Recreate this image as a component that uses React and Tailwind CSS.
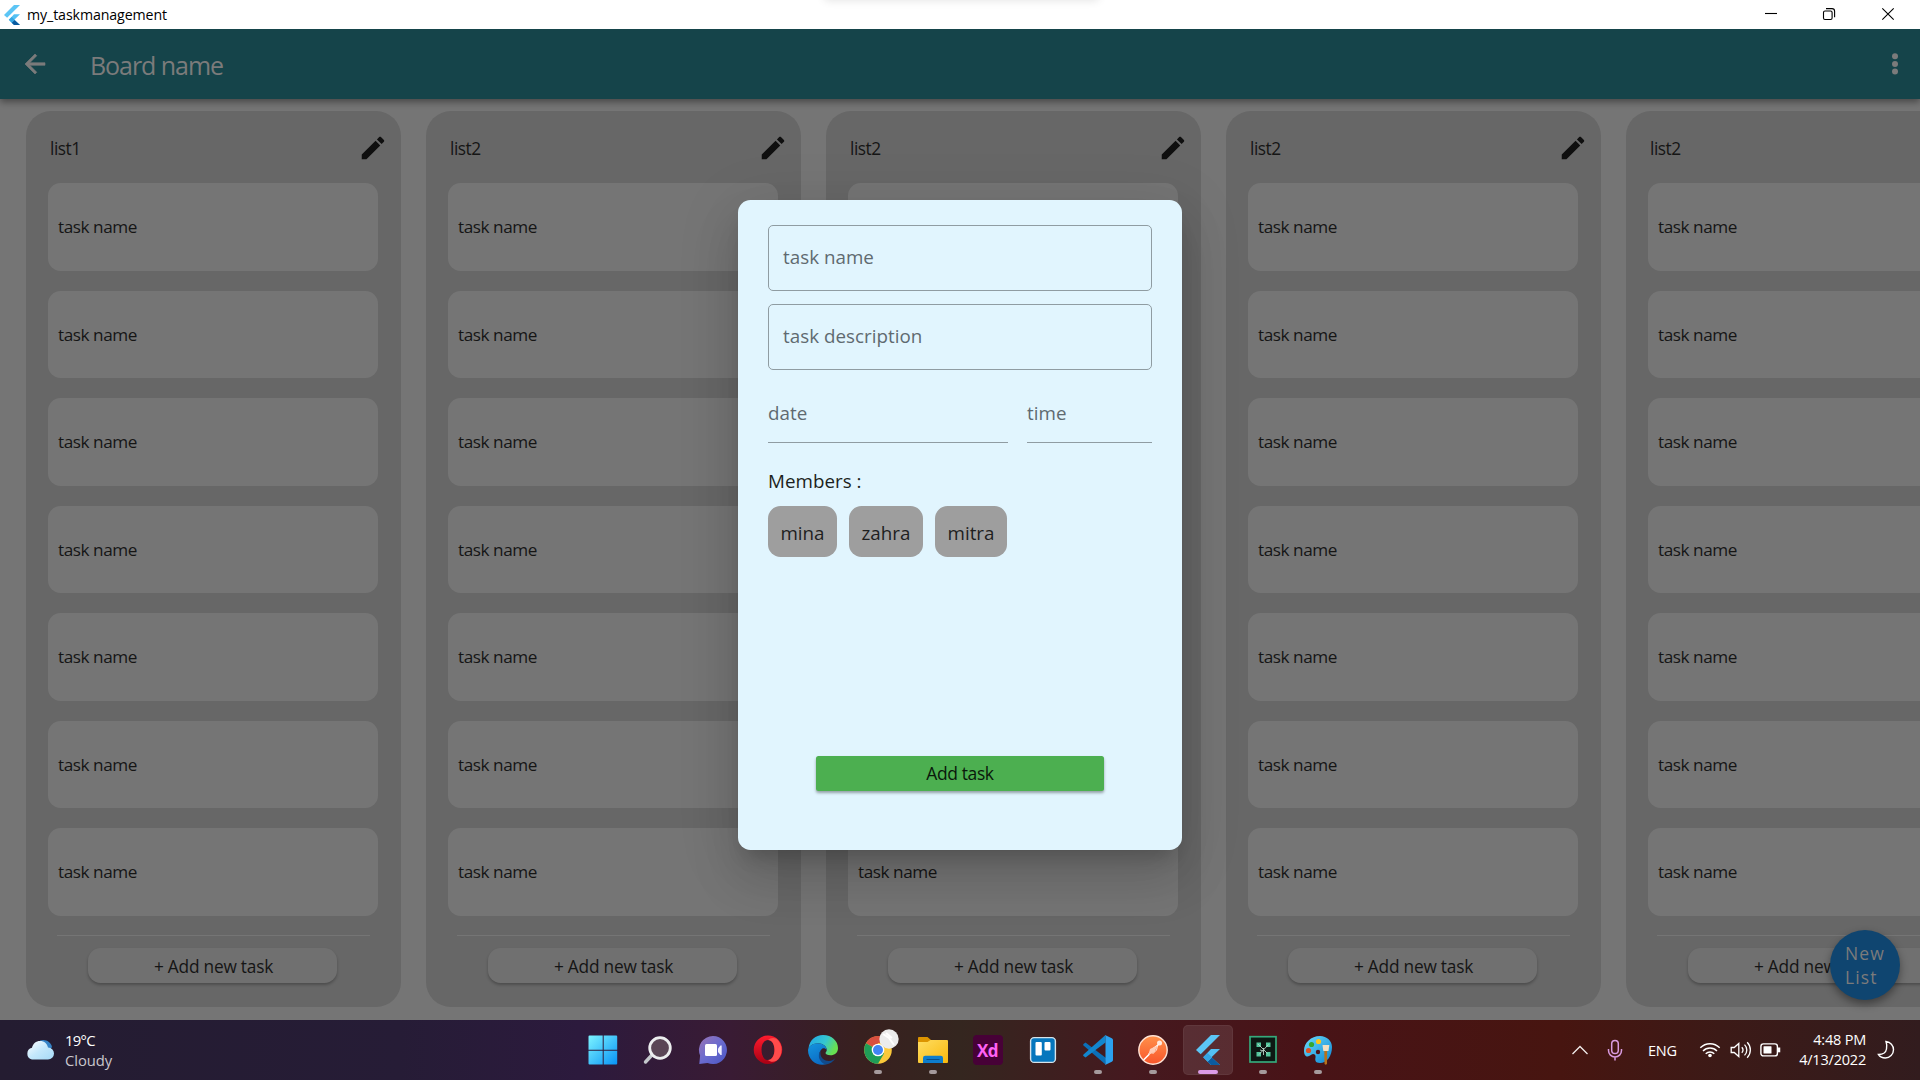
import React from "react";

const LISTS = ["list1", "list2", "list2", "list2", "list2"];
const TASKS = [1, 2, 3, 4, 5, 6, 7];

const Arrow = () => (
  <svg className="size-[30px]" viewBox="0 0 24 24" fill="#7b7b7b" stroke="#7b7b7b" strokeWidth=".5"><path d="M20 11H7.830l5.590-5.590L12 4l-8 8 8 8 1.410-1.410L7.830 13H20v-2z" /></svg>
);
const Pencil = () => (
  <svg className="size-[30px]" viewBox="0 0 24 24" fill="#0f0f0f"><path d="M3 17.250V21h3.750L17.810 9.940l-3.750-3.750L3 17.250zM20.710 7.040c.39-.39.39-1.020 0-1.410l-2.340-2.340c-.39-.39-1.020-.39-1.410 0l-1.830 1.830 3.750 3.750 1.830-1.830z" /></svg>
);
const Dots = () => (
  <svg className="size-[30px]" viewBox="0 0 24 24" fill="#7b7b7b"><circle cx="12" cy="5.800" r="2.400" /><circle cx="12" cy="11.900" r="2.400" /><circle cx="12" cy="18" r="2.400" /></svg>
);
const Flutter = ({ className }) => (
  <svg className={className} viewBox="0 0 24 30">
    <path d="M15 0H24L4.700 19.300 0 15z" fill="#5cc5f5" />
    <path d="M15 14h9L15.500 22.300 24 30h-9l-7.800-7.700z" fill="#54c1f4" />
    <path d="M11.500 26.700 15.900 22.600 24 30h-9z" fill="#0a5ba0" />
    <path d="m7.200 22.300 4.400-4.400 4.400 4.400-4.400 4.400z" fill="#35a7e4" />
  </svg>
);

function TitleBar() {
  return (
    <div className="relative flex h-[29px] items-center justify-between overflow-hidden bg-white">
      <div className="absolute -top-[10px] left-[824px] h-[10px] w-[275px] rounded-[6px] bg-gray-200 shadow-[0_0_9px_1px_rgba(0,0,0,0.1)]" />
      <div className="flex items-center">
        <Flutter className="ml-1 h-5 w-4" />
        <span className="mt-px ml-[7px] text-[14.200px] leading-[20px] tracking-[-0.1px] text-black">my_taskmanagement</span>
      </div>
      <svg className="h-[29px] w-[174px]" viewBox="0 0 174 29" fill="none" stroke="#000" strokeWidth="1.100">
        <path d="M19 13.500h12" />
        <rect x="77.500" y="11" width="8.600" height="8.500" rx="1.500" />
        <path d="M80 8.600h6a2.600 2.600 0 0 1 2.600 2.600v6" />
        <path d="m136.300 8.300 11.400 11.400M147.700 8.300l-11.400 11.400" />
      </svg>
    </div>
  );
}

function TaskList({ name }) {
  return (
    <section className="h-[896px] w-[375px] shrink-0 rounded-[25px] bg-[#676767]">
      <header className="flex h-[72px] items-center justify-between pr-[13px] pl-[24.500px]">
        <span className="mt-[3px] text-[17.300px] tracking-[-0.450px]">{name}</span>
        <div className="mt-[2px]"><Pencil /></div>
      </header>
      <div className="flex flex-col gap-5 px-[22.500px]">
        {TASKS.map((t) => (
          <div key={t} className="flex h-[87.500px] items-center rounded-[12.500px] bg-[#757575] pt-px pl-[10px] text-[17.200px] tracking-[-0.450px]">task name</div>
        ))}
      </div>
      <div className="mx-[31px] mt-[19px] h-px bg-[#757575]" />
      <div className="mt-[12.500px] ml-[62px] flex h-[35px] w-[249px] items-center justify-center rounded-[12.500px] bg-[#707070] pt-[2px] pl-[3px] text-[17.300px] tracking-[-0.220px] shadow-[0_2px_3px_rgba(0,0,0,0.250)]">+ Add new task</div>
    </section>
  );
}

function Dialog() {
  return (
    <div className="absolute top-[170.500px] left-[738px] flex h-[650px] w-[444px] flex-col rounded-[12.500px] bg-[#e1f5fe] px-[30px] pt-[25px] text-[18.800px] tracking-[0.020px] shadow-[0_14px_19px_-9px_rgba(0,0,0,0.2),0_30px_48px_4px_rgba(0,0,0,0.1),0_11px_58px_10px_rgba(0,0,0,0.08)]">
      <div className="flex h-[66px] shrink-0 items-center rounded-[5px] border border-[#8f9ca2] pl-[14px] text-[#5f6a70]">task name</div>
      <div className="mt-[13px] flex h-[66px] shrink-0 items-center rounded-[5px] border border-[#8f9ca2] pl-[14px] text-[#5f6a70]">task description</div>
      <div className="mt-[14px] flex gap-[19px] text-[#5f6a70]">
        <div className="flex h-[59px] w-[240px] items-center border-b border-[#8f9ca2] pt-[2px]">date</div>
        <div className="flex h-[59px] grow items-center border-b border-[#8f9ca2] pt-[2px]">time</div>
      </div>
      <div className="mt-[25px] leading-[26px] text-[#1c1f20]">Members :</div>
      <div className="mt-[12.500px] flex gap-3 text-[#1f1f1f]">
        <div className="flex h-[51px] w-[69px] items-center justify-center rounded-[12.500px] bg-[#9e9e9e] pt-1">mina</div>
        <div className="flex h-[51px] w-[74px] items-center justify-center rounded-[12.500px] bg-[#9e9e9e] pt-1">zahra</div>
        <div className="flex h-[51px] w-[72px] items-center justify-center rounded-[12.500px] bg-[#9e9e9e] pt-1">mitra</div>
      </div>
      <div className="mx-auto mt-auto mb-[58.500px] flex h-[35px] w-[288px] items-center justify-center rounded-[2.500px] bg-[#4caf50] text-[17.500px] tracking-[-0.400px] text-[#0a180b] shadow-[0_2px_3px_rgba(0,0,0,0.350)]">Add task</div>
    </div>
  );
}

const ICONS = [
  <svg className="size-[30px]" viewBox="0 0 30 30"><defs><linearGradient id="win" x1="0" y1="0" x2="1" y2="1"><stop stopColor="#7df4ff" /><stop offset="1" stopColor="#0893f6" /></linearGradient></defs><path fill="url(#win)" d="M1.500.5H14.700v14.200H.5V1.500a1 1 0 0 1 1-1zM15.700 .5h12.500a1 1 0 0 1 1 1V14.700H15.700zM.5 15.700H14.700v13.800H1.500a1 1 0 0 1-1-1zM15.700 15.700h13.500v12.800a1 1 0 0 1-1 1H15.700z" /></svg>,
  <svg className="size-[30px]" viewBox="0 0 30 30"><path d="m8.500 20.500-6 6.500" stroke="#c4c8cc" strokeWidth="3.400" strokeLinecap="round" /><circle cx="17" cy="13" r="10.300" fill="#5a4656" stroke="#eceeef" strokeWidth="2.800" /></svg>,
  <svg className="size-[30px]" viewBox="0 0 30 30"><defs><linearGradient id="chat" x1="0" y1="0" x2="1" y2="1"><stop stopColor="#9a73b4" /><stop offset=".5" stopColor="#6a6bcf" /><stop offset="1" stopColor="#4a55c4" /></linearGradient></defs><path fill="url(#chat)" d="M15 1a14 14 0 1 1-5.500 26.900L1.300 29l.8-8.400A14 14 0 0 1 15 1z" /><rect x="7" y="9" width="12" height="12" rx="1.500" fill="#fff" /><path fill="#f0f0ff" d="M20 13.500 22.500 10.500h1.200v9.500h-1.200L20 17z" /></svg>,
  <svg className="size-[30px]" viewBox="0 0 30 30"><defs><linearGradient id="op" x1="0" y1="0" x2="0" y2="1"><stop stopColor="#ff1b2d" /><stop offset="1" stopColor="#a70014" /></linearGradient></defs><path fillRule="evenodd" fill="url(#op)" d="M15 .5a14.200 14.200 0 1 0 0 28.500 14.200 14.200 0 1 0 0-28.500zM15 5c3.900 0 6.500 4.300 6.500 9.800S18.900 25 15 25s-6.500-4.600-6.500-10.200S11.100 5 15 5z" /><path fill="#ff4b4b" d="M15 5c2-2 5.500-2.600 8.500-1.200a14.200 14.200 0 0 1 0 22C20.500 27.500 17 27 15 25c3.900 0 6.500-4.600 6.500-10.200S18.900 5 15 5z" /></svg>,
  <svg className="size-[30px]" viewBox="0 0 30 30"><defs><linearGradient id="eg" x1="0" y1="0" x2="1" y2=".4"><stop stopColor="#1fa5e8" /><stop offset=".6" stopColor="#35c6d0" /><stop offset="1" stopColor="#68e052" /></linearGradient><linearGradient id="eb" x1="0" y1="0" x2=".5" y2="1"><stop stopColor="#1595df" /><stop offset="1" stopColor="#0b6cc4" /></linearGradient></defs><path fill="url(#eg)" d="M.5 13C1.800 5 7.500 0 15 0c9 0 15 6.200 15 13 0 4.800-3.500 7.300-7.500 7.300-3.300 0-5-1.100-5-2.200 0-.9 1.300-1.300 1.300-3.300 0-3.200-4-6.600-9-6.600-4.500 0-7.500 2.300-9.300 4.800z" /><path fill="url(#eb)" d="M.5 13C2.500 10 6 8.200 9.800 8.200c5 0 9 3.400 9 6.600-1-1.200-2.500-1.800-4-1.500-3 2-4 5-3 9 1 3.500 4 6 7.500 6.500C10 32 0 26 0 15z" /><path fill="#114a8b" d="M12.700 15.500c-1.500 6 2.500 10.500 8.300 10.500 2.600 0 4.600-1.100 6.500-3-2.200 3.500-5.500 6-9.500 6.500-6-1.500-9.500-8.500-5.300-14z" /></svg>,
  <svg className="size-[36px] shrink-0 translate-x-[3px] -translate-y-[3px]" viewBox="0 0 36 36"><circle cx="15" cy="21" r="13.800" fill="#fbc93a" /><path fill="#d94f3f" d="M15 21 3 14.200a13.800 13.800 0 0 1 24-0.200H15z" /><path fill="#1f9d57" d="m15 21-12-6.800A13.800 13.800 0 0 0 15 34.800L21 24.500z" /><circle cx="15" cy="21" r="6.300" fill="#fff" /><circle cx="15" cy="21" r="5" fill="#4285f4" /><circle cx="26" cy="10" r="9.700" fill="#ececec" /><path d="m20 5 6 4 5 7m-8-12 6 5" stroke="#fff" strokeWidth="2" fill="none" /></svg>,
  <svg className="size-[30px]" viewBox="0 0 30 30"><defs><linearGradient id="fo" x1="0" y1="0" x2="1" y2="1"><stop stopColor="#ffdd61" /><stop offset="1" stopColor="#f8b90d" /></linearGradient></defs><path fill="#dc9400" d="M1.200 2H9.500L13 5v4H0V3.200C0 2.500.5 2 1.200 2z" /><path fill="url(#fo)" d="M0 7h9.500l3-2H29a1 1 0 0 1 1 1v21a1 1 0 0 1-1 1H1a1 1 0 0 1-1-1z" /><path fill="#0d7dcc" d="M5 28v-5a2.300 2.300 0 0 1 2.300-2.300h15.400A2.300 2.300 0 0 1 25 23v5z" /><path d="M8.500 24.500h13" stroke="#064e8b" strokeWidth="1" /></svg>,
  <div className="flex size-[30px] items-center justify-center rounded-[4px] bg-[#470137] font-['Open_Sans'] text-[17px] leading-none font-bold tracking-[-0.5px] text-[#ff61f6]">Xd</div>,
  <svg className="size-[30px]" viewBox="0 0 30 30"><rect x="2.600" y="2.600" width="24.800" height="24.800" rx="3.500" fill="#0576bd" stroke="#d6e2e9" strokeWidth="1.400" /><rect x="7.500" y="7" width="6.300" height="13.500" rx="1" fill="#fff" /><rect x="16.500" y="7" width="6" height="8.600" rx="1" fill="#fff" /></svg>,
  <svg className="size-[30px]" viewBox="0 0 30 30"><path fill="#0b70b8" d="m2.500 7.500 20.500 15.500-.5 6.500L.5 10.500a1.200 1.200 0 0 1 0-1.600z" /><path fill="#1286ce" d="M2.500 22.500 22.500 7.500V0L.5 19.500a1.200 1.200 0 0 0 0 1.600z" /><path fill="#2ba2f0" d="m22 0 6.800 3.200A2 2 0 0 1 30 5v20a2 2 0 0 1-1.200 1.800L22 30c.4-.5.5-1 .5-2V2c0-1-.1-1.500-.5-2z" /></svg>,
  <svg className="size-[30px]" viewBox="0 0 30 30"><defs><linearGradient id="po" x1="0" y1="0" x2="0" y2="1"><stop stopColor="#ff914b" /><stop offset="1" stopColor="#f9552a" /></linearGradient></defs><circle cx="15" cy="15" r="14.200" fill="url(#po)" stroke="#ffe3d5" strokeWidth="1.400" /><circle cx="21.500" cy="8" r="2.500" fill="#ffe8dc" /><path d="m20 10-6 4.500-3.500 5.500L6 24.500" stroke="#fff" strokeWidth="1.500" fill="none" strokeLinecap="round" /><path d="M19.500 10.500 12 14l-1.500 6 6-3z" fill="#ffcdb6" /><path d="m19.500 11-1 4-4 4" stroke="#ffe3d5" fill="none" /></svg>,
  <Flutter className="h-[30px] w-6" />,
  <svg className="size-[30px]" viewBox="0 0 30 30"><rect x="2" y="1.700" width="26" height="25.300" fill="#0c1813" stroke="#35a97b" strokeWidth="1.700" /><path fill="#52c69c" d="M8.500 7.500h4.500v4.500H8.500zM18 7.500h4.500v4.500H18zM8.500 17h4.500v4.500H8.500zM18 17h4.500v4.500H18z" /><path d="M10 9l9.500 9.500M20.500 9.500 11 19.500M15.500 13v7M12 15l3.500 1" stroke="#b9cfc6" strokeWidth=".9" /></svg>,
  <svg className="size-[30px]" viewBox="0 0 30 30"><defs><linearGradient id="pa" x1="0" y1="0" x2="1" y2="1"><stop stopColor="#6bdcfb" /><stop offset="1" stopColor="#0d86d3" /></linearGradient></defs><path fill="url(#pa)" d="M17 1c7 0 12 5 12 11 0 9-5 16-12 16-5 0-5-3-4.500-5.500.4-2-.5-3.500-2.500-3.500-2 0-3 2.500-5.500 2.500S1 19 1 15.500C1 8 8 1 17 1z" /><circle cx="15.500" cy="6.500" r="2.600" fill="#fdc51c" /><circle cx="8.500" cy="9.500" r="2.600" fill="#36a82f" /><circle cx="5.500" cy="15.500" r="2.600" fill="#dd5226" /><circle cx="15" cy="17" r="2.200" fill="#4c151b" /><path fill="#b9711b" d="M21.300 15h2.900l-.2 13.500c0 1.500-2.400 1.500-2.500 0z" /><path fill="#f2dfc2" d="M19.500 10h6.800l-.8 6h-5.200z" /></svg>,
];
const RUNNING = [5, 6, 9, 10, 12, 13];

function Taskbar() {
  return (
    <footer className="relative flex h-[60px] items-center justify-between bg-[linear-gradient(90deg,#241c31_0px,#261c36_400px,#2c1a3d_580px,#391b34_730px,#38201f_860px,#34261f_960px,#45191f_1130px,#481317_1300px,#471510_1560px,#3c1a17_1720px,#321c1e_1920px)]">
      <div className="flex items-center gap-[10px] pl-[25px]">
        <svg className="h-6 w-[30px]" viewBox="0 0 30 24"><defs><linearGradient id="cl" x1="0" y1="0" x2="1" y2="1"><stop stopColor="#fff" /><stop offset=".5" stopColor="#c4e8fc" /><stop offset="1" stopColor="#a5d9f7" /></linearGradient></defs><path fill="#3583c7" d="M15 2.500c5-2 11 1 12 6.500l-3 4-8-4z" /><path fill="url(#cl)" d="M7 21.500A6 6 0 0 1 7 9.800C8 5.500 11 3 15 3c4.500 0 7 2.500 8 6.500A6 6 0 0 1 23 21.500z" /></svg>
        <div className="text-[14.800px] leading-5 tracking-[-0.050px] text-white">
          <div className="tracking-[-0.700px]">19°C</div>
          <div className="text-[#c9c6cd]">Cloudy</div>
        </div>
      </div>
      <div className="absolute top-0 left-[575px] flex h-[60px]">
        {ICONS.map((icon, i) => (
          <div key={i} className="relative flex w-[55px] items-center justify-center">
            {i === 11 && <div className="absolute top-[5px] left-[3px] h-[50px] w-[50px] rounded-[5px] border border-white/5 bg-white/10" />}
            <div className="relative flex size-[30px] items-center justify-center">{icon}</div>
            {RUNNING.includes(i) && <div className="absolute bottom-[6px] left-[24px] h-1 w-2 rounded-full bg-[#a59a9c]" />}
            {i === 11 && <div className="absolute bottom-[6px] left-[18px] h-1 w-5 rounded-full bg-[#dc9be6]" />}
          </div>
        ))}
      </div>
      <div className="flex items-center text-[14.500px] leading-5 tracking-[-0.200px] text-white">
        <svg className="h-4 w-[18px]" viewBox="0 0 18 16" fill="none" stroke="#f1eceb" strokeWidth="1.300"><path d="m1.500 12 7.500-7.500 7.500 7.500" /></svg>
        <svg className="ml-[18px] h-[22px] w-4" viewBox="0 0 16 22" fill="none" stroke="#d99be0" strokeWidth="1.500"><rect x="4.700" y="1.500" width="6.600" height="13" rx="3.300" /><path d="M1.500 10v1.500a6.500 6.500 0 0 0 13 0V10M8 18v3.500" /></svg>
        <span className="mt-px ml-[25px] w-[30px] tracking-[-0.200px]">ENG</span>
        <svg className="ml-[21px] h-5 w-[22px]" viewBox="0 0 22 20" fill="none" stroke="#fff" strokeWidth="1.400"><path d="M1.300 7.800a13.700 13.700 0 0 1 19.400 0M4 10.900a9.900 9.900 0 0 1 14 0M6.700 13.800a6.100 6.100 0 0 1 8.600 0" /><circle cx="11" cy="15.500" r="1.800" fill="#fff" stroke="none" /></svg>
        <svg className="ml-[9px] h-5 w-[22px]" viewBox="0 0 22 20" fill="none" stroke="#fff" strokeWidth="1.300"><path d="M1.200 7.500v5h3l4.600 4V3.500l-4.600 4zM11.800 7.300a4 4 0 0 1 0 5.400M14.500 4.600a7.500 7.500 0 0 1 0 10.800M17.200 2.300a11 11 0 0 1 0 15.400" /></svg>
        <svg className="ml-[8px] h-5 w-[21px]" viewBox="0 0 21 20" fill="none" stroke="#fff" strokeWidth="1.400"><rect x=".9" y="3.900" width="16.500" height="12" rx="2.500" /><rect x="3.500" y="6.300" width="8" height="7.300" rx=".5" fill="#fff" stroke="none" /><path d="M19 7.500v4.800" strokeWidth="2.500" /></svg>
        <div className="ml-[10px] w-[75px] text-right"><div>4:48 PM</div><div className="whitespace-nowrap">4/13/2022</div></div>
        <svg className="mr-[25px] ml-[11px] h-[20px] w-[18px]" viewBox="0 0 18 20" fill="none" stroke="#fff" strokeWidth="1.400"><path d="M9 1.500c4.500.5 7.500 4 7.500 8.300a8.200 8.200 0 0 1-8.200 8.200c-3 0-5.300-1.200-6.800-3.500C6.500 14.500 9 12 9.500 9 9.900 6 9.800 3.500 9 1.500z" /></svg>
      </div>
    </footer>
  );
}

export default function App() {
  return (
    <div className="flex h-[1080px] w-[1920px] flex-col overflow-hidden font-['Open_Sans','Noto_Sans',sans-serif]">
      <TitleBar />
      <div className="relative flex h-[991px] flex-col overflow-hidden bg-[#757575] text-[#151515]">
        <div className="z-10 flex h-[70px] shrink-0 items-center bg-[#15444a] pr-[10px] pl-5 shadow-[0_3px_7px_rgba(0,0,0,0.4)]">
          <Arrow />
          <h1 className="mt-[4px] ml-[40px] grow text-[25px] tracking-[-1.050px] text-[#7b7b7b]">Board name</h1>
          <Dots />
        </div>
        <main className="flex gap-[25px] pt-[12px] pl-[25.500px]">
          {LISTS.map((name, i) => <TaskList key={i} name={name} />)}
        </main>
        <div className="absolute top-[901px] left-[1830px] flex size-[70px] items-center rounded-full bg-[#0f4570] pl-[15px] text-[17.500px] leading-6 tracking-[1.100px] text-[#7b7b7b] shadow-[0_4px_8px_rgba(0,0,0,0.4)]">New<br />List</div>
        <Dialog />
      </div>
      <Taskbar />
    </div>
  );
}
